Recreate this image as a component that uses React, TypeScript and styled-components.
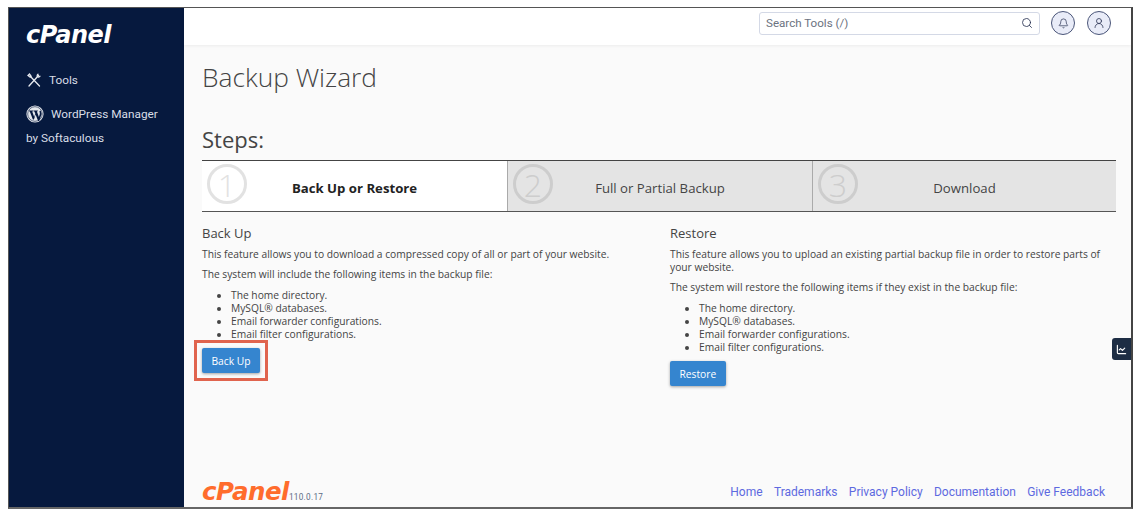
import styled, { createGlobalStyle } from "styled-components";
import { Search, Bell, UserRound, LineChart } from "lucide-react";

const GlobalStyle = createGlobalStyle`
  html, body {
    margin: 0;
    padding: 0;
    background: #fff;
  }
  body {
    font-family: "Open Sans", "Liberation Sans", sans-serif;
  }
`;

const Frame = styled.div`
  position: relative;
  box-sizing: border-box;
  display: flex;
  width: 1125px;
  height: 502px;
  margin: 7px 0 0 8px;
  border: 1px solid #555;
  border-right: 2px solid #444;
  border-bottom: 2px solid #666;
  background: #fafafa;
  overflow: hidden;
`;

const Sidebar = styled.aside`
  flex: 0 0 175px;
  background: #06193e;
  color: #d8dde6;
  font-family: Roboto, "Liberation Sans", sans-serif;
  font-size: 11.8px;
  padding: 14px 0 0 17px;
  box-sizing: border-box;
`;

const SideLogo = styled.div`
  font-family: "DejaVu Sans", Lato, sans-serif;
  font-weight: 700;
  font-style: italic;
  font-size: 24px;
  line-height: 26px;
  letter-spacing: -0.5px;
  color: #fff;
  margin-bottom: 20px;
`;

const NavItem = styled.div<{ $tight?: boolean }>`
  display: flex;
  align-items: center;
  gap: 7px;
  height: 24px;
  margin-bottom: ${(p) => (p.$tight ? 0 : 10)}px;
`;

const NavPlain = styled.div`
  height: 24px;
  line-height: 24px;
`;

const Body = styled.div`
  flex: 1;
  min-width: 0;
  display: flex;
  flex-direction: column;
`;

const TopBar = styled.header`
  flex: 0 0 37px;
  box-sizing: border-box;
  display: flex;
  align-items: center;
  justify-content: flex-end;
  gap: 12px;
  padding: 0 20px 7px 0;
  background: #fff;
  box-shadow: 0 1px 3px rgba(0, 0, 0, 0.06);
`;

const SearchBox = styled.div`
  box-sizing: border-box;
  display: flex;
  align-items: center;
  justify-content: space-between;
  width: 281px;
  height: 23px;
  margin-right: -1px;
  padding: 0 6px;
  border: 1px solid #d4d9e6;
  border-radius: 3px;
  font-family: Roboto, "Liberation Sans", sans-serif;
  font-size: 11.6px;
  color: #6b7280;
  background: #fff;
`;

const RoundButton = styled.div`
  box-sizing: border-box;
  display: flex;
  align-items: center;
  justify-content: center;
  width: 24px;
  height: 24px;
  border-radius: 50%;
  border: 1px solid #4a5578;
  background: #e9ecf8;
  color: #2c3555;
`;

const Main = styled.main`
  flex: 1;
  display: flex;
  flex-direction: column;
  padding: 0 15px 0 18px;
  color: #333;
`;

const Title = styled.h1`
  margin: 13px 0 0;
  font-size: 26.3px;
  line-height: 38px;
  font-weight: 300;
  color: #444;
`;

const StepsHeading = styled.h2`
  margin: 27px 0 0;
  font-size: 22px;
  line-height: 32px;
  font-weight: 400;
  color: #444;
`;

const Steps = styled.div`
  display: grid;
  grid-template-columns: 305px 305px 1fr;
  margin-top: 5px;
  height: 52px;
  border-top: 1.5px solid #444;
  border-bottom: 1.5px solid #555;
  box-sizing: border-box;
`;

const Step = styled.div<{ $active?: boolean }>`
  position: relative;
  display: flex;
  align-items: center;
  justify-content: center;
  padding-top: 4px;
  box-sizing: border-box;
  font-size: 13.2px;
  font-weight: ${(p) => (p.$active ? 700 : 400)};
  color: ${(p) => (p.$active ? "#222" : "#444")};
  background: ${(p) => (p.$active ? "#fff" : "#e4e4e4")};
  border-left: ${(p) => (p.$active ? "none" : "1.5px solid #aaa")};
`;

const StepNumber = styled.span<{ $active?: boolean }>`
  position: absolute;
  left: 5px;
  top: 3px;
  box-sizing: border-box;
  width: 40px;
  height: 40px;
  border: 3px solid ${(p) => (p.$active ? "#e2e2e2" : "#cdcdcd")};
  border-radius: 50%;
  display: flex;
  align-items: center;
  justify-content: center;
  font-size: 32px;
  font-weight: 300;
  color: ${(p) => (p.$active ? "#e2e2e2" : "#cdcdcd")};
`;

const Columns = styled.div`
  display: grid;
  grid-template-columns: 468px 1fr;
  margin-top: 11px;
`;

const Column = styled.section`
  font-size: 10.25px;
  line-height: 13px;
  color: #444;
`;

const ColumnTitle = styled.h3`
  margin: 0 0 5px;
  font-size: 13px;
  line-height: 20px;
  font-weight: 400;
  color: #444;
`;

const Text = styled.p`
  margin: 0 0 7px;
`;

const Items = styled.ul`
  margin: 0 0 7px;
  padding: 1px 0 0 29px;
`;

const Highlight = styled.div`
  width: fit-content;
  margin: -8px;
  padding: 5px;
  border: 3px solid #e0644e;
`;

const Action = styled.button`
  display: block;
  height: 25px;
  padding: 0 9.5px;
  border: none;
  border-radius: 2px;
  font-family: inherit;
  font-size: 10.25px;
  color: #fff;
  background: #3585cf;
  box-shadow: 0 1px 3px rgba(0, 0, 0, 0.35);
`;

const Footer = styled.footer`
  margin-top: auto;
  height: 27px;
  display: flex;
  align-items: flex-start;
  justify-content: space-between;
  padding-right: 11px;
`;

const Brand = styled.div`
  display: flex;
  align-items: flex-end;
  gap: 0;
`;

const FootLogo = styled.span`
  font-family: "DejaVu Sans", Lato, sans-serif;
  font-weight: 700;
  font-style: italic;
  font-size: 24.5px;
  line-height: 24px;
  letter-spacing: -0.5px;
  color: #ff6c2c;
`;

const Version = styled.span`
  font-family: Roboto, "Liberation Sans", sans-serif;
  font-size: 8.2px;
  line-height: 14px;
  letter-spacing: 0.3px;
  color: #5c6b85;
`;

const Links = styled.nav`
  display: flex;
  gap: 11.3px;
  font-family: Roboto, "Liberation Sans", sans-serif;
  font-size: 12px;
  line-height: 24px;
  color: #5d69e0;
`;

const SideTab = styled.div`
  position: absolute;
  right: 0;
  top: 330px;
  width: 19px;
  height: 22px;
  display: flex;
  align-items: center;
  justify-content: center;
  border-radius: 3px 0 0 3px;
  background: #1d2d44;
  color: #fff;
`;

const Tools = () => (
  <svg width="16" height="16" viewBox="0 0 16 16" fill="none" stroke="#e6e9ef" strokeWidth="1.3" strokeLinecap="round">
    <path d="M3 14 12.5 3.5" />
    <path d="M12 2.2c-1 .8-1 1.8-.4 2.4.6.6 1.6.6 2.4-.4" />
    <path d="M13.5 14 4.5 4.5" />
    <path d="M2 3.5 3.5 2l1.6 2.2-1 1z" />
  </svg>
);

const WordPress = () => (
  <svg width="18" height="18" viewBox="0 0 18 18">
    <circle cx="9" cy="9" r="8.6" fill="#e4e7ec" />
    <circle cx="9" cy="9" r="7.3" fill="none" stroke="#06193e" strokeWidth="0.6" />
    <path
      d="M3 5.6h4.2v.7l-1 .1 2 5.6 1.1-3.2-.9-2.4-.8-.1v-.7h4.2v.7l-.9.1 2 5.5.9-2.9c.3-1.1-.1-1.9-.5-2.6l1.4-1 1 3.5-2.6 7.1h-1L9.6 9.5l-1.7 4.9h-1L3.8 6.4 3 6.3z"
      fill="#06193e"
    />
  </svg>
);

const steps = ["Back Up or Restore", "Full or Partial Backup", "Download"];
const items = [
  "The home directory.",
  "MySQL® databases.",
  "Email forwarder configurations.",
  "Email filter configurations.",
];
const links = ["Home", "Trademarks", "Privacy Policy", "Documentation", "Give Feedback"];

export default function App() {
  return (
    <>
      <GlobalStyle />
      <Frame>
        <Sidebar>
          <SideLogo>cPanel</SideLogo>
          <NavItem>
            <Tools />
            Tools
          </NavItem>
          <NavItem $tight>
            <WordPress />
            WordPress Manager
          </NavItem>
          <NavPlain>by Softaculous</NavPlain>
        </Sidebar>
        <Body>
          <TopBar>
            <SearchBox>
              Search Tools (/)
              <Search size={12} strokeWidth={1.7} color="#2c3555" />
            </SearchBox>
            <RoundButton>
              <Bell size={11} strokeWidth={1.6} />
            </RoundButton>
            <RoundButton>
              <UserRound size={12} strokeWidth={1.6} />
            </RoundButton>
          </TopBar>
          <Main>
            <Title>Backup Wizard</Title>
            <StepsHeading>Steps:</StepsHeading>
            <Steps>
              {steps.map((label, i) => (
                <Step key={label} $active={i === 0}>
                  <StepNumber $active={i === 0}>{i + 1}</StepNumber>
                  {label}
                </Step>
              ))}
            </Steps>
            <Columns>
              <Column>
                <ColumnTitle>Back Up</ColumnTitle>
                <Text>This feature allows you to download a compressed copy of all or part of your website.</Text>
                <Text>The system will include the following items in the backup file:</Text>
                <Items>
                  {items.map((item) => (
                    <li key={item}>{item}</li>
                  ))}
                </Items>
                <Highlight>
                  <Action>Back Up</Action>
                </Highlight>
              </Column>
              <Column>
                <ColumnTitle>Restore</ColumnTitle>
                <Text>
                  This feature allows you to upload an existing partial backup file in order to restore parts of your
                  website.
                </Text>
                <Text>The system will restore the following items if they exist in the backup file:</Text>
                <Items>
                  {items.map((item) => (
                    <li key={item}>{item}</li>
                  ))}
                </Items>
                <Action>Restore</Action>
              </Column>
            </Columns>
            <Footer>
              <Brand>
                <FootLogo>cPanel</FootLogo>
                <Version>110.0.17</Version>
              </Brand>
              <Links>
                {links.map((link) => (
                  <span key={link}>{link}</span>
                ))}
              </Links>
            </Footer>
          </Main>
        </Body>
        <SideTab>
          <LineChart size={11} strokeWidth={2.5} />
        </SideTab>
      </Frame>
    </>
  );
}
